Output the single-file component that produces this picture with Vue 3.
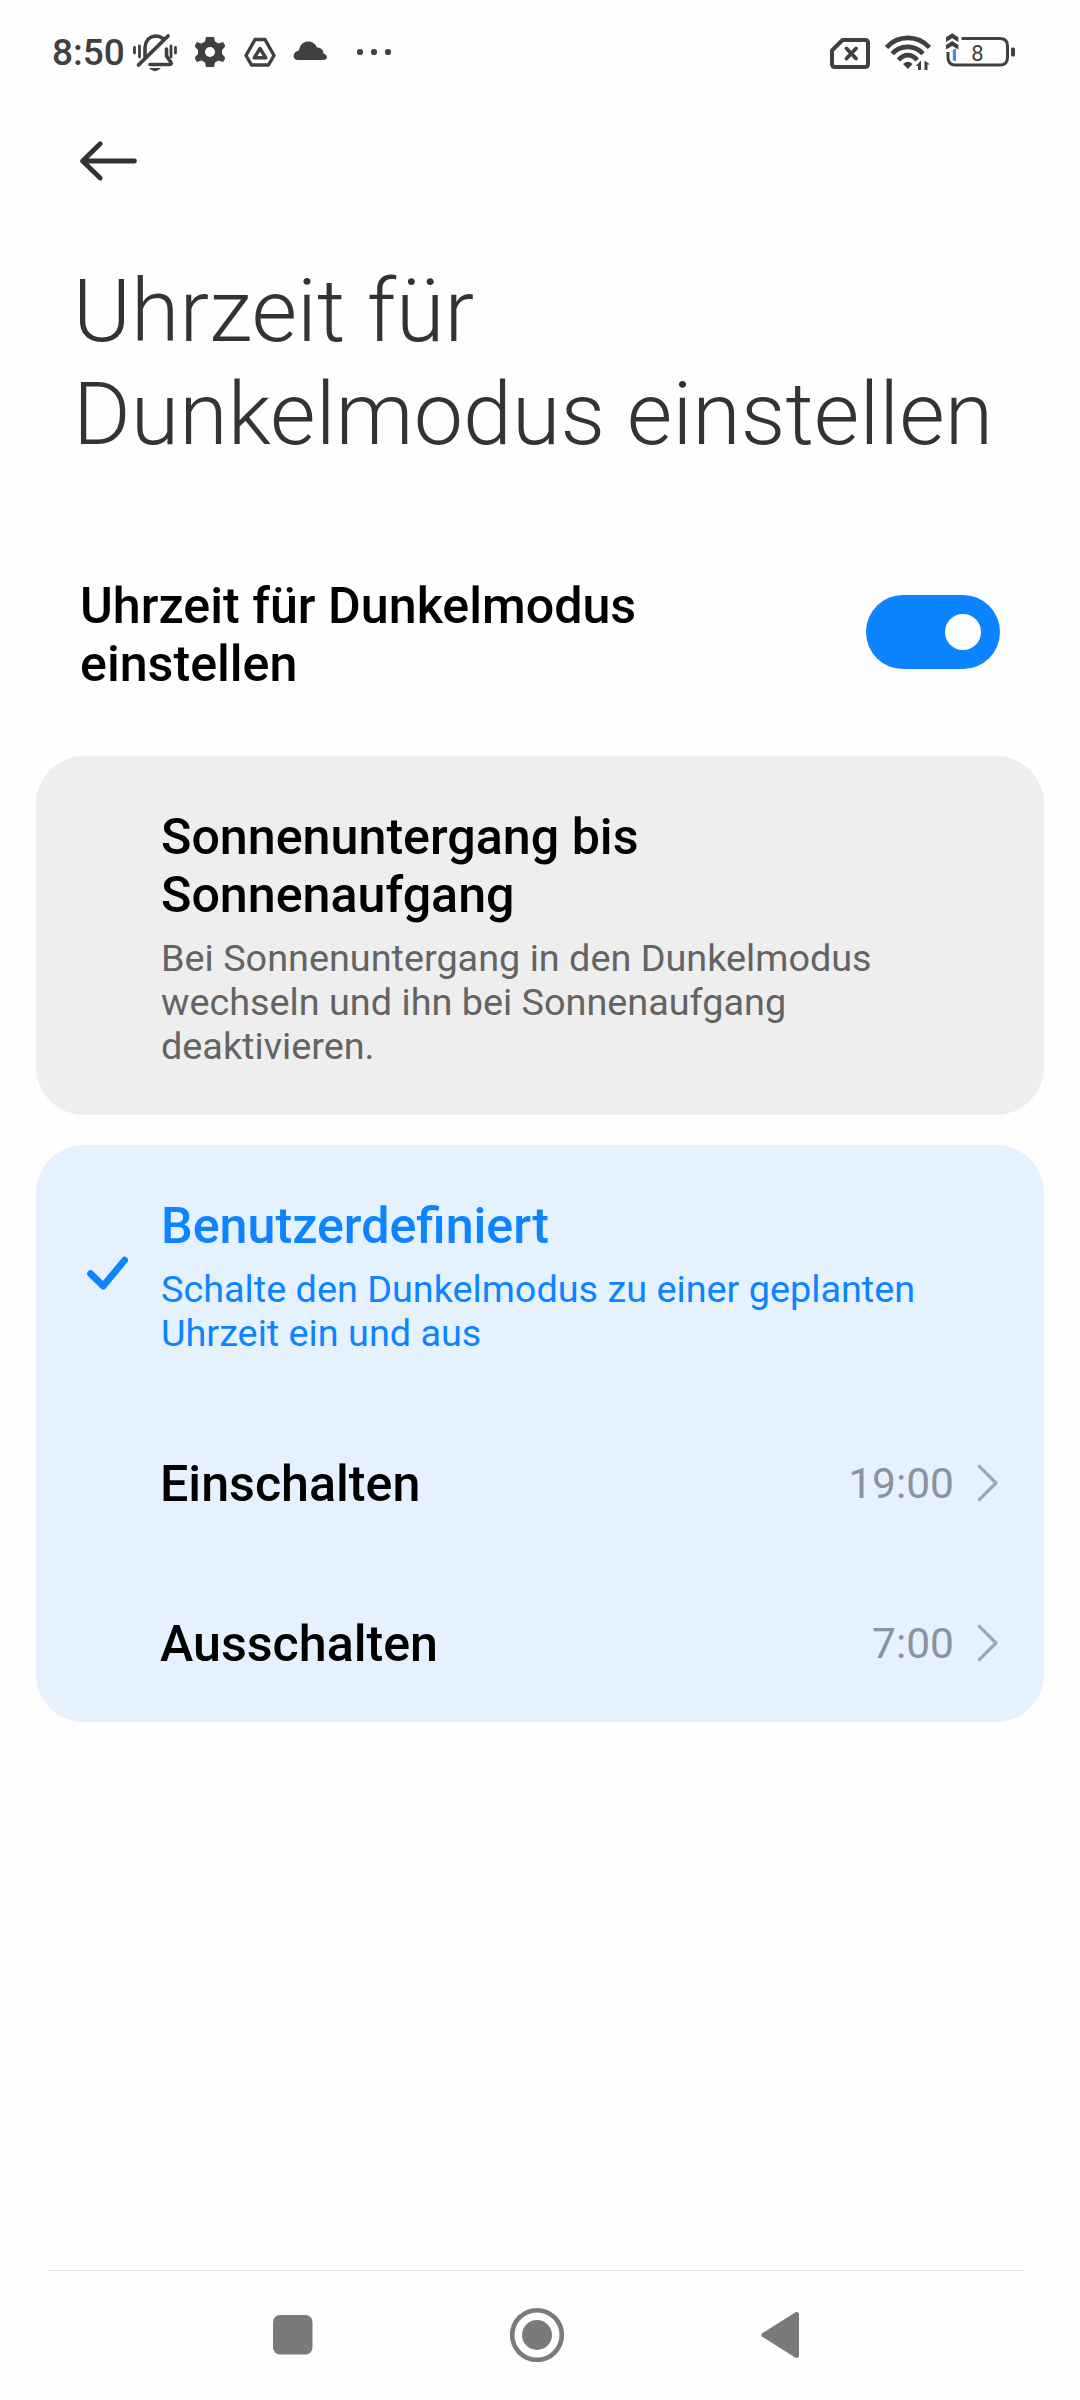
<template>
    <div class="screen">
        <header class="status-bar">
            <span class="clock">8:50</span>
            <svg class="status-left" width="270" height="44" viewBox="130 30 270 44">
                <g stroke="#404040" fill="none" stroke-linecap="round" stroke-linejoin="round">
                    <path d="M134.500 47.500V53M139.500 46V57M171 46V57M175.500 47.500V53" stroke-width="2.800" />
                    <path d="M145 57V47.500Q145.500 37.500 155 36Q160 36 163 38.500M166.500 49V56L171 62.500Q172 64.500 169 64.500H150" stroke-width="3.600" />
                    <path d="M138.500 65L168 36" stroke-width="3.800" />
                </g>
                <path d="M149 68H161Q155 74.500 149 68Z" fill="#404040" />
                <path fill="#404040" fill-rule="evenodd" d="M206 37H214L215 41.500L218.500 43.500L223 42L225 45L224.800 47L222 50V54L224.800 57L225 59L223 62L218.500 60.500L215 62.500L214 67H206L205 62.500L201.500 60.500L197 62L195 59L195.200 57L198 54V50L195.200 47L195 45L197 42L201.500 43.500L205 41.500ZM210 47A5 5 0 1 0 210 57A5 5 0 1 0 210 47Z" />
                <path d="M255 39.500H265L274 55.500L268.500 65H251.500L246 55.500Z" stroke="#404040" stroke-width="3.400" fill="none" stroke-linejoin="round" />
                <path d="M260 48.500L265.800 57.800H254.200Z" stroke="#404040" stroke-width="3.400" fill="none" stroke-linejoin="round" />
                <path d="M298 60C292 60 292 51.500 299 50.500C300 44 304 41.500 308.500 41.500C312.500 41.500 315.500 44 317 47.500C321 47.500 323.500 50 323.500 53.500C328.500 55 328 60 323 60Z" fill="#404040" />
                <g fill="#404040">
                    <circle cx="360" cy="52" r="3.100" />
                    <circle cx="374" cy="52" r="3.100" />
                    <circle cx="388" cy="52" r="3.100" />
                </g>
            </svg>
            <svg class="status-right" width="190" height="44" viewBox="828 30 190 44">
                <g stroke="#404040" fill="none" stroke-linecap="round" stroke-linejoin="round">
                    <path d="M842.500 40H865Q868 40 868 43V64Q868 67 865 67H835Q832 67 832 64V50.500Z" stroke-width="4" />
                    <path d="M846.500 48.500L856 58.500M856 48.500L846.500 58.500" stroke-width="3.800" />
                </g>
                <g stroke="#404040" fill="none" stroke-width="4.600">
                    <path d="M886.500 47.500C898 34.700 917.500 34.700 929.500 47.500" />
                    <path d="M892.300 53.700C900 44.600 915 44.600 923 53.700" />
                    <path d="M898.500 60C904 53.500 911.500 53.500 917.300 60" />
                </g>
                <path d="M903 64Q908 59.500 912.500 64L908 69Z" fill="#404040" />
                <path d="M915.800 66L921 60.500V70H918V66ZM930 64.500H927.500V70H924.500V60.500Z" fill="#404040" />
                <path d="M961.500 38.500H1000Q1007.500 38.500 1007.500 46V57.500Q1007.500 65 1000 65H955.500Q948 65 948 57.500V52" stroke="#404040" stroke-width="3" fill="none" />
                <path d="M946 37.300L952.200 33.200L958.400 37.300V42L952.200 38.200L946 42ZM946 45L952.200 41L958.400 45V49.500L952.200 46L946 49.500Z" fill="#404040" />
                <path d="M952.800 50L956 48.500V61H954.500L952.800 60Z" fill="#3c8cf0" />
                <rect x="1011" y="47.500" width="4" height="9" rx="1.500" fill="#404040" />
                <text x="977.500" y="60.700" text-anchor="middle" class="battery-level">8</text>
            </svg>
        </header>

        <nav class="app-bar">
            <svg width="60" height="44" viewBox="78 138.500 60 44">
                <path d="M134.500 160.500H83M100.200 143.200L82.500 160.500L100.200 177.500" stroke="#333" stroke-width="4.800" fill="none" stroke-linecap="round" stroke-linejoin="round" />
            </svg>
        </nav>

        <h1>Uhrzeit für<br>Dunkelmodus einstellen</h1>

        <section class="toggle-row">
            <h2>Uhrzeit für Dunkelmodus<br>einstellen</h2>
            <button class="switch" :class="{ on: enabled }" @click="enabled = !enabled"><i></i></button>
        </section>

        <section class="card">
            <h2>Sonnenuntergang bis<br>Sonnenaufgang</h2>
            <p>Bei Sonnenuntergang in den Dunkelmodus<br>wechseln und ihn bei Sonnenaufgang<br>deaktivieren.</p>
        </section>

        <section class="card selected">
            <div class="option">
                <svg class="check" width="46" height="44" viewBox="84 1252 46 44">
                    <path d="M90.600 1273.700L103.200 1286L124.600 1260.200" stroke="#0d84ff" stroke-width="6.800" fill="none" stroke-linecap="round" stroke-linejoin="round" />
                </svg>
                <div>
                    <h2>Benutzerdefiniert</h2>
                    <p>Schalte den Dunkelmodus zu einer geplanten<br>Uhrzeit ein und aus</p>
                </div>
            </div>
            <div v-for="item in times" :key="item.label" class="time-row">
                <h2>{{ item.label }}</h2>
                <span>{{ item.value }}</span>
                <svg width="24" height="40" viewBox="0 0 24 40">
                    <path d="M3.300 3.300L20 20L3.300 36.700" stroke="#9da8b3" stroke-width="3.200" fill="none" stroke-linecap="round" stroke-linejoin="round" />
                </svg>
            </div>
        </section>

        <footer class="nav-bar">
            <svg width="976" height="128" viewBox="49 2271 976 128" fill="#7a7a7a">
                <rect x="273" y="2315" width="39.500" height="39.500" rx="7" />
                <circle cx="537" cy="2335" r="24.800" fill="none" stroke="#7a7a7a" stroke-width="4.600" />
                <circle cx="537" cy="2335" r="15" />
                <path d="M764 2335L796.500 2314.500V2355.500Z" stroke="#7a7a7a" stroke-width="5" stroke-linejoin="round" />
            </svg>
        </footer>
    </div>
</template>

<script setup>
import { ref } from 'vue';

const enabled = ref(true);
const times = ref([
    { label: 'Einschalten', value: '19:00' },
    { label: 'Ausschalten', value: '7:00' },
]);
</script>

<style>
body {
    margin: 0;
    background: #fefefe;
}
</style>

<style scoped>
.screen {
    width: 1080px;
    height: 2400px;
    display: flex;
    flex-direction: column;
    font-family: Roboto, sans-serif;
    background: #fefefe;
    overflow: hidden;
}

h1,
h2,
p {
    margin: 0;
}

svg {
    display: block;
    flex: none;
}

.status-bar {
    height: 74px;
    display: flex;
    align-items: flex-end;
    padding: 0 62px 0 52px;
    flex: none;
}

.clock {
    width: 78px;
    font-size: 37px;
    font-weight: 500;
    line-height: 43px;
    color: #404040;
}

.status-right {
    margin-left: auto;
}

.battery-level {
    font-size: 22px;
    font-weight: 450;
    fill: #404040;
}

.app-bar {
    height: 185px;
    padding: 64.500px 0 0 78px;
    box-sizing: border-box;
    flex: none;
}

h1 {
    padding-left: 73px;
    font-size: 88px;
    font-weight: 300;
    line-height: 103px;
    letter-spacing: 0.1px;
    color: #333;
    white-space: nowrap;
}

h2 {
    font-size: 50.200px;
    font-weight: 500;
    line-height: 58px;
    color: #000;
    white-space: nowrap;
}

p {
    margin-top: 12px;
    font-size: 37.800px;
    line-height: 44px;
    color: #636363;
    white-space: nowrap;
}

.toggle-row {
    margin: 112px 80px 0;
    height: 179px;
    display: flex;
    justify-content: space-between;
    flex: none;
}

.switch {
    width: 134px;
    height: 74px;
    margin-top: 18px;
    padding: 0 19px;
    display: flex;
    align-items: center;
    border: 0;
    border-radius: 37px;
    background: #e0e0e0;
}

.switch.on {
    justify-content: flex-end;
    background: #0d84ff;
}

.switch i {
    width: 36px;
    height: 36px;
    border-radius: 50%;
    background: #fff;
}

.card {
    height: 359px;
    margin: 0 36px 30px;
    padding: 52px 0 0 125px;
    box-sizing: border-box;
    border-radius: 48px;
    background: #eee;
    flex: none;
}

.card.selected {
    height: 577px;
    margin-bottom: 0;
    padding: 52px 44px 0 30px;
    background: #e5f1ff;
}

.option {
    height: 206px;
    display: flex;
}

.option h2,
.option p {
    color: #0d84ff;
}

.check {
    margin: 55px 31px 0 18px;
}

.time-row {
    height: 160px;
    display: flex;
    align-items: center;
    padding-left: 94px;
}

.time-row h2 {
    padding-top: 1px;
}

.time-row span {
    margin-left: auto;
    padding-right: 22px;
    font-size: 42.500px;
    color: #8a939c;
}

.nav-bar {
    margin: auto 55px 0 49px;
    height: 130px;
    border-top: 1px solid #e3e3e3;
    box-sizing: border-box;
    flex: none;
}
</style>
